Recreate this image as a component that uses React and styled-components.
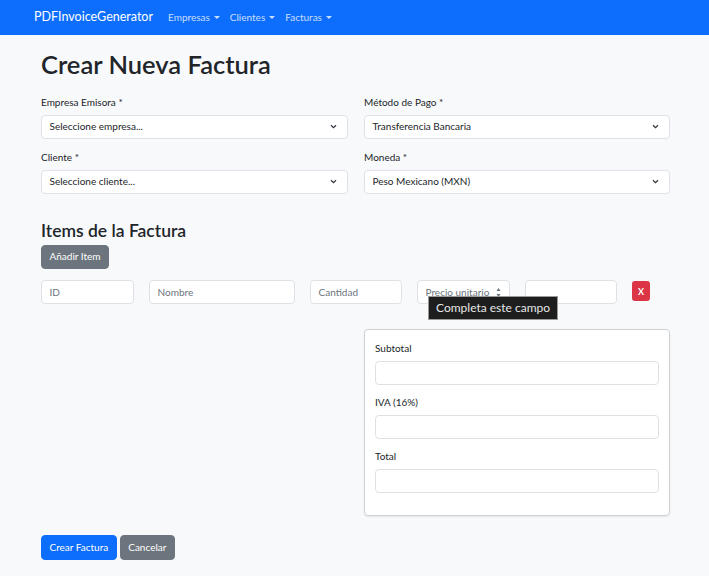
import React from "react";
import styled, { createGlobalStyle } from "styled-components";

const Global = createGlobalStyle`
  html, body { margin: 0; padding: 0; }
  body {
    background: #f8f9fa;
    font-family: Lato, "Noto Sans", "Open Sans", sans-serif;
    font-size: 10px;
    line-height: 1.5;
    color: #212529;
  }
  * { box-sizing: border-box; }
`;

const Navbar = styled.nav`
  height: 35px;
  background: #0d6efd;
  display: flex;
  align-items: center;
  padding: 0 34px;
  gap: 15px;
`;

const Brand = styled.a`
  color: #fff;
  font-size: 12.5px;
  text-decoration: none;
`;

const NavList = styled.ul`
  display: flex;
  list-style: none;
  margin: 0;
  padding: 0;
  gap: 10px;
`;

const NavItem = styled.li`
  color: rgba(255, 255, 255, 0.78);
  font-size: 10px;
  display: flex;
  align-items: center;
  gap: 4px;
`;

const Caret = styled.span`
  display: inline-block;
  border-top: 3px solid currentColor;
  border-left: 3px solid transparent;
  border-right: 3px solid transparent;
  margin-top: -1px;
`;

const Container = styled.main`
  width: 629px;
  margin: 0 39px 0 41px;
  padding-top: 14px;
  padding-bottom: 20px;
`;

const Title = styled.h1`
  font-size: 25.5px;
  font-weight: 600;
  line-height: 1.2;
  margin: 0 0 15px;
`;

const SubTitle = styled.h3`
  font-size: 17.5px;
  font-weight: 600;
  line-height: 1.2;
  margin: 26px 0 4px;
`;

const TwoCols = styled.div`
  display: grid;
  grid-template-columns: 307px 1fr;
  column-gap: 16px;
`;

const Field = styled.div`
  margin-bottom: ${(p) => (p.$last ? "0" : "11px")};
`;

const Label = styled.label`
  display: block;
  margin-bottom: 5px;
  line-height: 15px;
`;

const SelectBox = styled.div`
  height: 24px;
  background: #fff;
  border: 1px solid #dee2e6;
  border-radius: 4px;
  display: flex;
  align-items: center;
  justify-content: space-between;
  padding: 0 10px 0 7.5px;
`;

const Input = styled.div`
  position: relative;
  height: 24px;
  background: #fff;
  border: 1px solid #dee2e6;
  border-radius: 4px;
  display: flex;
  align-items: center;
  padding: 0 7.5px;
  color: #6c757d;
`;

const Button = styled.button`
  font-family: inherit;
  font-size: ${(p) => (p.$small ? "9px" : "10px")};
  line-height: ${(p) => (p.$small ? "13px" : "15px")};
  padding: ${(p) => (p.$small ? "2.5px 5px" : "3.75px 7.5px")};
  border: 1px solid ${(p) => p.$bg};
  background: ${(p) => p.$bg};
  color: #fff;
  border-radius: ${(p) => (p.$small ? "2.5px" : "4px")};
  font-weight: ${(p) => (p.$small ? 700 : 400)};
  cursor: pointer;
`;

const ItemRow = styled.div`
  display: grid;
  grid-template-columns: 93px 146px 92px 93px 92px 1fr;
  column-gap: 15px;
  margin-top: 11px;
  align-items: start;
`;

const DelButton = styled(Button)`
  justify-self: start;
  margin-top: 1px;
`;

const Spinner = styled.svg`
  position: absolute;
  right: 8px;
  top: 6px;
`;

const Tooltip = styled.div`
  position: absolute;
  left: 10px;
  top: 15px;
  white-space: nowrap;
  background: #1e1e1e;
  border: 1px solid #9a9a9a;
  color: #e6e6e6;
  font-size: 12px;
  padding: 3px 7px;
  line-height: 16px;
  z-index: 2;
`;

const TotalsWrap = styled.div`
  display: grid;
  grid-template-columns: 307px 1fr;
  column-gap: 16px;
  margin-top: 25px;
`;

const Card = styled.div`
  grid-column: 2;
  background: #fff;
  border: 1px solid #cfd2d5;
  border-radius: 4px;
  padding: 11px 10px 12px;
  box-shadow: 0 1px 2px rgba(0, 0, 0, 0.08);
`;

const CardInput = styled(Input)`
  margin-bottom: 10px;
`;

const Actions = styled.div`
  display: flex;
  gap: 3px;
  margin-top: 19px;
`;

const Chevron = () => (
  <svg width="7" height="5" viewBox="0 0 7 5">
    <path d="M1 1.2 L3.5 3.6 L6 1.2" fill="none" stroke="#343a40" strokeWidth="1.3" />
  </svg>
);

export default function App() {
  return (
    <>
      <Global />
      <Navbar>
        <Brand>PDFInvoiceGenerator</Brand>
        <NavList>
          <NavItem>Empresas <Caret /></NavItem>
          <NavItem>Clientes <Caret /></NavItem>
          <NavItem>Facturas <Caret /></NavItem>
        </NavList>
      </Navbar>
      <Container>
        <Title>Crear Nueva Factura</Title>
        <TwoCols>
          <div>
            <Field>
              <Label>Empresa Emisora *</Label>
              <SelectBox>Seleccione empresa...<Chevron /></SelectBox>
            </Field>
            <Field $last>
              <Label>Cliente *</Label>
              <SelectBox>Seleccione cliente...<Chevron /></SelectBox>
            </Field>
          </div>
          <div>
            <Field>
              <Label>Método de Pago *</Label>
              <SelectBox>Transferencia Bancaria<Chevron /></SelectBox>
            </Field>
            <Field $last>
              <Label>Moneda *</Label>
              <SelectBox>Peso Mexicano (MXN)<Chevron /></SelectBox>
            </Field>
          </div>
        </TwoCols>

        <SubTitle>Items de la Factura</SubTitle>
        <Button $bg="#6c757d">Añadir Item</Button>

        <ItemRow>
          <Input>ID</Input>
          <Input>Nombre</Input>
          <Input>Cantidad</Input>
          <Input>
            Precio unitario
            <Spinner width="5" height="11" viewBox="0 0 5 11">
              <path d="M0.5 4 L2.5 1 L4.5 4 Z" fill="#6c757d" />
              <path d="M0.5 7 L2.5 10 L4.5 7 Z" fill="#6c757d" />
            </Spinner>
            <Tooltip>Completa este campo</Tooltip>
          </Input>
          <Input />
          <DelButton $small $bg="#dc3545">X</DelButton>
        </ItemRow>

        <TotalsWrap>
          <Card>
            <Label>Subtotal</Label>
            <CardInput />
            <Label>IVA (16%)</Label>
            <CardInput />
            <Label>Total</Label>
            <CardInput />
          </Card>
        </TotalsWrap>

        <Actions>
          <Button $bg="#0d6efd">Crear Factura</Button>
          <Button $bg="#6c757d">Cancelar</Button>
        </Actions>
      </Container>
    </>
  );
}
